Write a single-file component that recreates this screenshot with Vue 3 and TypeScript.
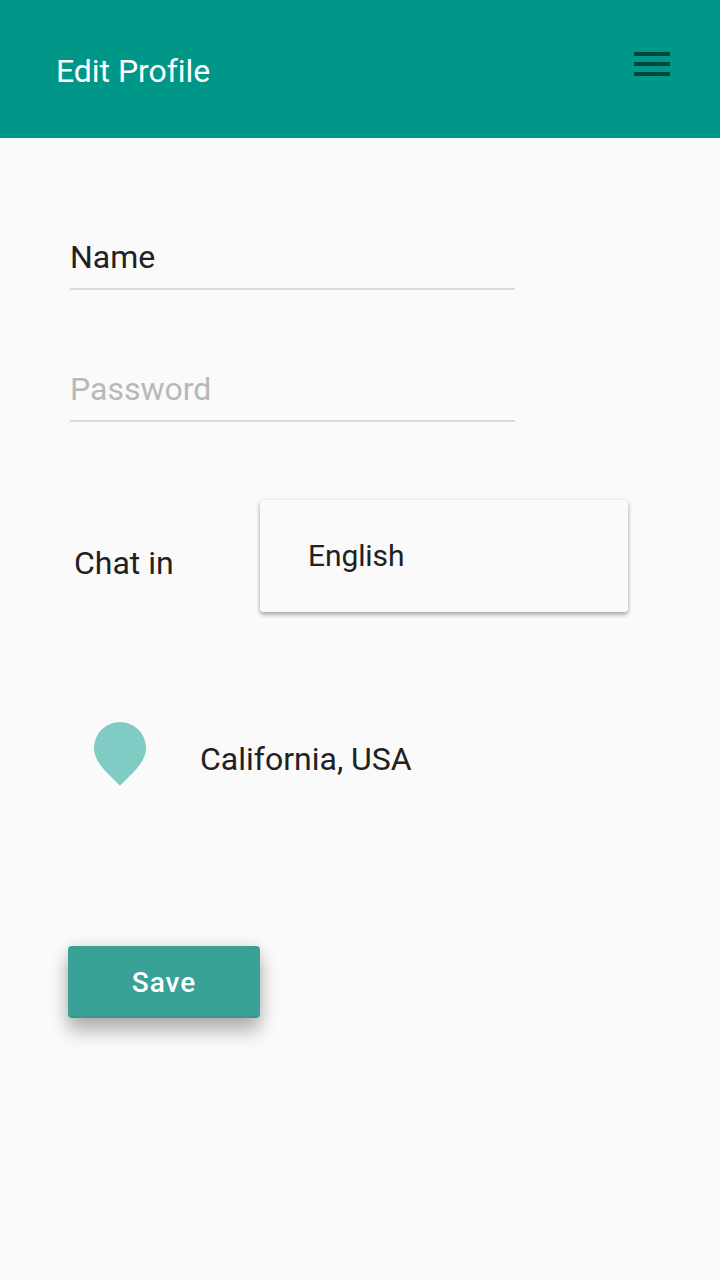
<script setup lang="ts">
import { ref } from 'vue'

const name = ref('Name')
const language = ref('English')
const place = ref('California, USA')
</script>

<template>
  <div class="screen">
    <header class="bar">
      <h1 class="title">Edit Profile</h1>
      <svg class="menu" width="36" height="24" viewBox="0 0 36 24" aria-label="Menu">
        <path d="M0 0h36v4H0zM0 10h36v4H0zM0 20h36v4H0z" />
      </svg>
    </header>
    <main class="form">
      <div class="field"><span class="name">{{ name }}</span></div>
      <div class="field"><span class="hint">Password</span></div>
      <div class="chat">
        <span class="label">Chat in</span>
        <div class="select"><span class="language">{{ language }}</span></div>
      </div>
      <div class="location">
        <svg class="pin" width="52" height="64" viewBox="0 0 52 64" aria-hidden="true">
          <path d="M26 0A26 26 0 0 0 0 26C0 40.5 14 51.5 26 63.7C38 51.5 52 40.5 52 26A26 26 0 0 0 26 0Z" />
        </svg>
        <span class="place">{{ place }}</span>
      </div>
      <button class="save" type="button"><span>Save</span></button>
    </main>
  </div>
</template>

<style>
body {
  background: #fafafa;
}
</style>

<style scoped>
.screen {
  width: 720px;
  height: 1280px;
  overflow: hidden;
  background: #fafafa;
  color: #212121;
  font-family: Roboto, sans-serif;
  font-size: 32px;
  font-variant-ligatures: none;
  line-height: 40px;
}
.bar {
  display: flex;
  justify-content: space-between;
  align-items: flex-start;
  box-sizing: border-box;
  height: 138px;
  padding: 51px 50px 0 56px;
  background: #009688;
}
.title {
  margin: 0;
  color: #fff;
  font-size: 32px;
  font-weight: 400;
  letter-spacing: -0.05px;
}
.menu {
  margin-top: 1px;
  fill: rgba(0, 0, 0, 0.54);
}
.form {
  display: flex;
  flex-direction: column;
  align-items: flex-start;
  padding: 99px 68px 0;
}
.field {
  box-sizing: border-box;
  width: 445px;
  height: 53px;
  margin: 0 0 79px 2px;
  border-bottom: 2px solid #dadada;
}
.hint {
  color: #b8b8b8;
}
.chat {
  display: flex;
  align-items: flex-start;
  height: 112px;
  margin-top: -1px;
}
.label {
  width: 186px;
  padding: 43px 0 0 6px;
  box-sizing: border-box;
}
.select {
  box-sizing: border-box;
  width: 368px;
  height: 112px;
  margin-left: 6px;
  padding: 36px 48px;
  border-radius: 4px;
  box-shadow: 0 0 4px rgba(0, 0, 0, 0.12), 0 3px 4px rgba(0, 0, 0, 0.28);
  font-size: 30px;
  letter-spacing: -0.1px;
}
.location {
  display: flex;
  margin-top: 110px;
  padding-left: 26px;
}
.pin {
  fill: #80cbc4;
}
.place {
  margin: 17px 0 0 54px;
}
.save {
  width: 192px;
  height: 72px;
  margin-top: 160px;
  padding: 2px 0 0;
  border: 0;
  border-radius: 4px;
  background: #3aa197;
  box-shadow:
    inset 0 -2px 1px rgba(0, 0, 0, 0.06),
    0 0 16px rgba(0, 0, 0, 0.12),
    0 14px 18px rgba(0, 0, 0, 0.26);
  color: #fff;
  font: 500 28px/40px Roboto, sans-serif;
  letter-spacing: 1px;
}
</style>
